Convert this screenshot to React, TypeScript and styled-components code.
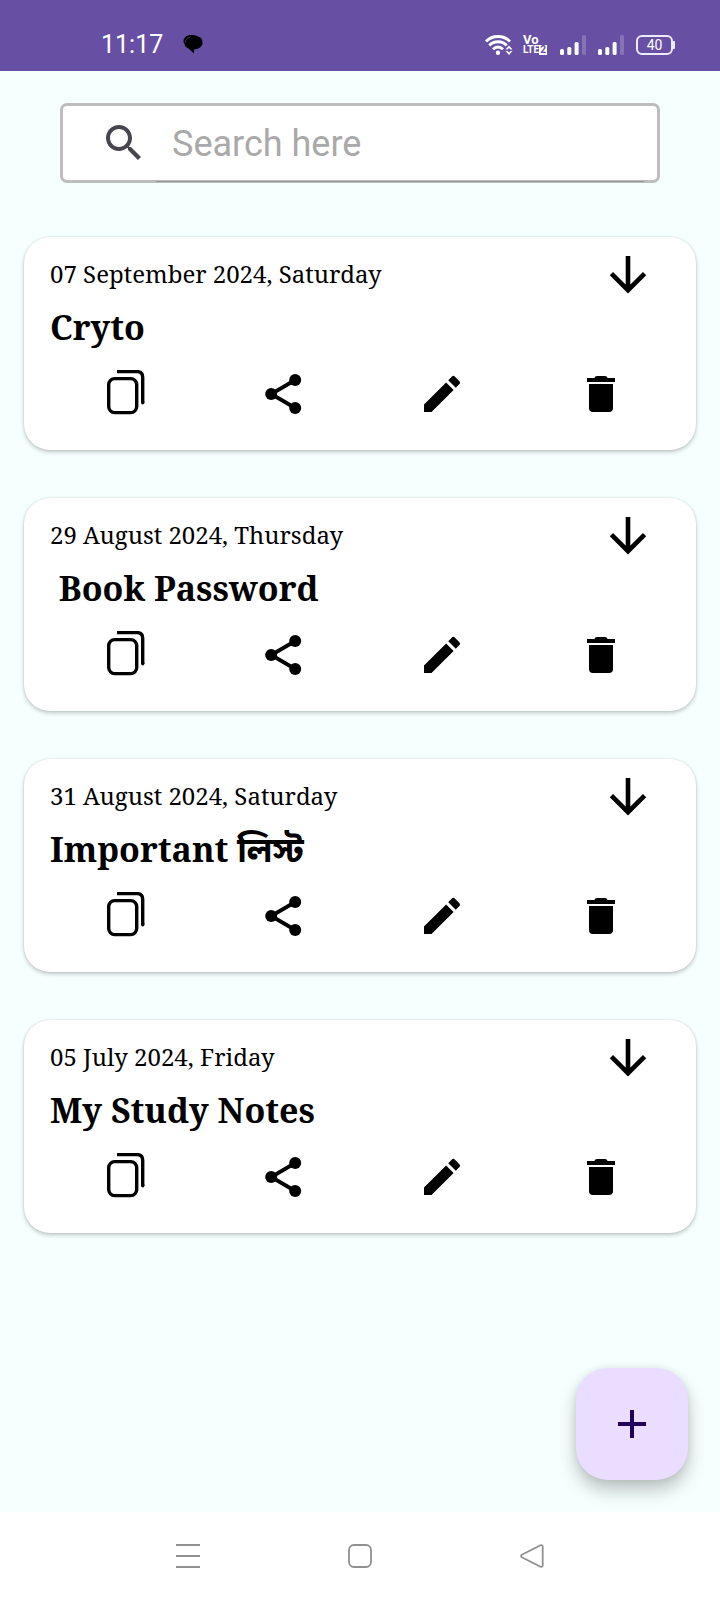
import React from "react";
import styled, { createGlobalStyle } from "styled-components";

const GlobalStyle = createGlobalStyle`
  *, *::before, *::after { box-sizing: border-box; }
  body {
    margin: 0;
    background: #f5fffd;
    font-family: Roboto, sans-serif;
    color: #000;
  }
  button {
    border: 0;
    padding: 0;
    background: none;
    color: inherit;
    font: inherit;
    cursor: pointer;
  }
  svg { display: block; }
`;

const Screen = styled.div`
  display: flex;
  flex-direction: column;
  min-height: 100vh;
`;

const StatusBar = styled.header`
  display: flex;
  align-items: flex-end;
  justify-content: space-between;
  height: 71px;
  padding: 0 45px 16px 101px;
  background: #6750a4;
  color: #fff;
`;

const StatusGroup = styled.div<{ $gap: number }>`
  display: flex;
  align-items: center;
  gap: ${(p) => p.$gap}px;
`;

const Clock = styled.time`
  padding-top: 2px;
  font-size: 25px;
  line-height: 20px;
`;

const Volte = styled.div`
  display: flex;
  flex-direction: column;
  width: 25px;
`;

const VolteRow = styled.div<{ $size: number }>`
  display: flex;
  align-items: center;
  height: 10px;
  font: bold ${(p) => p.$size}px/10px Roboto, sans-serif;
`;

const SimTag = styled.span`
  width: 8px;
  height: 10px;
  background: #fff;
  color: #6750a4;
  text-align: center;
`;

const Battery = styled.div`
  display: flex;
  align-items: center;
`;

const BatteryBody = styled.div`
  width: 37px;
  height: 20px;
  border: 2px solid #efeaf8;
  border-radius: 6px;
  font-size: 14px;
  line-height: 17px;
  text-align: center;
`;

const BatteryTip = styled.div`
  width: 2px;
  height: 8px;
  border-radius: 0 1px 1px 0;
  background: #efeaf8;
`;

const Main = styled.main`
  display: flex;
  flex: 1;
  flex-direction: column;
  padding: 32px 24px 48px;
`;

const SearchBox = styled.label`
  position: relative;
  display: flex;
  align-items: center;
  gap: 24px;
  height: 80px;
  margin: 0 36px 54px;
  padding: 0 13px 0 37px;
  border: 3px solid #bcbebd;
  border-radius: 7px;
  background: #fff;
  color: #49454f;

  &::after {
    content: "";
    position: absolute;
    right: 13px;
    bottom: -2px;
    left: 93px;
    height: 1px;
    background: #969897;
  }
`;

const SearchInput = styled.input`
  flex: 1;
  min-width: 0;
  height: 100%;
  padding: 2px 0 0;
  border: 0;
  outline: 0;
  background: none;
  font: 36px Roboto, sans-serif;
  color: #1c1b1f;

  &::placeholder {
    color: #a9a9a9;
    opacity: 1;
  }
`;

const NoteList = styled.ul`
  display: flex;
  flex-direction: column;
  gap: 48px;
  margin: 0;
  padding: 0;
  list-style: none;
`;

const NoteCard = styled.li`
  padding-bottom: 32px;
  border-radius: 26px;
  background: #fff;
  box-shadow: 0 2px 4px rgba(0, 0, 0, 0.22), 0 0 2px rgba(0, 0, 0, 0.12);
`;

const NoteHeader = styled.div`
  display: flex;
  align-items: flex-start;
  justify-content: space-between;
  padding: 14px 44px 0 26px;
`;

const NoteText = styled.div`
  display: flex;
  flex-direction: column;
  gap: 13px;
  padding-top: 7px;
  font-family: "Noto Serif", "DejaVu Serif Condensed", "DejaVu Serif", "Noto Sans Bengali", serif;
`;

const NoteDate = styled.time`
  font-size: 24px;
  line-height: 32px;
`;

const NoteTitle = styled.h2`
  margin: 0;
  font-size: 34px;
  font-weight: bold;
  line-height: 48px;
  white-space: pre;
`;

const NoteActions = styled.div`
  display: grid;
  grid-template-columns: repeat(4, 1fr);
  justify-items: center;
  margin-top: 19px;
  padding: 0 16px 0 22px;
`;

const AddButton = styled.button`
  position: fixed;
  right: 32px;
  bottom: 120px;
  display: flex;
  align-items: center;
  justify-content: center;
  width: 112px;
  height: 112px;
  border-radius: 32px;
  background: #eaddff;
  color: #21005d;
  box-shadow: 0 10px 18px rgba(0, 0, 0, 0.24), 0 0 8px rgba(0, 0, 0, 0.08);
`;

const NavBar = styled.nav`
  display: grid;
  grid-template-columns: repeat(3, 1fr);
  align-items: center;
  justify-items: center;
  height: 88px;
  padding: 0 102px;
  background: #fff;
  color: #909090;
`;

const ChatIcon = () => (
  <svg width="20" height="20" viewBox="0 0 20 20">
    <path d="M3 2.500C5 .5 12 .5 15 2.500c3 .5 4.500 3 4.500 6 0 4-3 6.500-8.500 7V19.500L5.500 14.500C3 13.500 1.500 11.500 1.300 9.500 0 8 0 5 3 2.500Z" fill="#000" />
    <path d="M2.200 8.500C2.500 5.500 4.500 3.500 7.500 3" fill="none" stroke="#51418a" strokeWidth=".8" />
  </svg>
);

const WifiIcon = () => (
  <svg width="28" height="20" viewBox="0 0 28 20" fill="none" stroke="#fff" strokeWidth="2.800">
    <path d="M1 6.500C7.500-.2 18.500-.2 25 6.500" />
    <path d="M4.300 10.500C9 5.500 17 5.500 21.700 10.500" />
    <path d="M8 14.300C11 11.200 15 11.200 18 14.300" />
    <circle cx="13" cy="17.800" r="2.200" fill="#fff" stroke="none" />
    <path d="m20.500 14.500 3.500-4 3.500 4h-2L24 13l-1.500 1.500ZM20.500 16l3.500 4 3.500-4h-2L24 17.500 22.500 16Z" fill="#fff" stroke="none" />
  </svg>
);

const SignalIcon = () => (
  <svg width="26" height="20" viewBox="0 0 26 20" fill="#fff">
    <rect y="14" width="4" height="6" rx="1.500" />
    <rect x="7.300" y="12" width="4" height="8" rx="1.500" />
    <rect x="14.600" y="7" width="4" height="13" rx="1.500" />
    <rect x="22" width="4" height="20" rx="1.500" opacity=".2" />
  </svg>
);

const SearchIcon = () => (
  <svg width="48" height="48" viewBox="0 0 24 24" fill="currentColor">
    <path d="M15.500 14h-.79l-.28-.27C15.410 12.590 16 11.110 16 9.500 16 5.910 13.090 3 9.500 3S3 5.910 3 9.500 5.910 16 9.500 16c1.610 0 3.090-.59 4.230-1.570l.27.28v.79l5 4.990L20.490 19l-4.990-5zm-6 0C7.010 14 5 11.990 5 9.500S7.010 5 9.500 5 14 7.010 14 9.500 11.990 14 9.500 14z" />
  </svg>
);

const ArrowDownIcon = () => (
  <svg width="48" height="48" viewBox="0 0 48 48" fill="none" stroke="#000" strokeWidth="4.600">
    <path d="M24 5v35M7.400 22.600 24 39.200l16.600-16.600" />
  </svg>
);

const CopyIcon = () => (
  <svg width="48" height="48" viewBox="0 0 48 48" fill="none" stroke="#000" strokeWidth="3.400">
    <rect x="7.700" y="8.600" width="28" height="34" rx="6" />
    <path d="M16 1.600H36q5.700 0 5.700 5.700V33" />
    <path d="M41.700 32v.8" strokeLinecap="round" />
  </svg>
);

const ShareIcon = () => (
  <svg width="48" height="48" viewBox="0 0 24 24">
    <path d="M17.600 5 5.600 12l12 7" fill="none" stroke="#000" strokeWidth="1.900" />
    <circle cx="17.600" cy="5" r="3" />
    <circle cx="5.600" cy="12" r="3" />
    <circle cx="17.600" cy="19" r="3" />
  </svg>
);

const EditIcon = () => (
  <svg width="48" height="48" viewBox="0 0 24 24">
    <path d="M3 17.250V21h3.750L17.810 9.940l-3.750-3.750L3 17.250zM20.710 7.040c.39-.39.39-1.020 0-1.410l-2.340-2.340a.996.996 0 0 0-1.410 0l-1.830 1.830 3.750 3.750 1.830-1.830z" />
  </svg>
);

const DeleteIcon = () => (
  <svg width="48" height="48" viewBox="0 0 24 24">
    <path d="M6 7v12q0 2 2 2h8q2 0 2-2V7ZM5 4v2h14V4h-3.700q-.3-1-1.300-1h-4q-1 0-1.300 1Z" />
  </svg>
);

const PlusIcon = () => (
  <svg width="28" height="28" viewBox="0 0 28 28" fill="currentColor">
    <path d="M12 0h4v12h12v4H16v12h-4V16H0v-4h12Z" />
  </svg>
);

const RecentsIcon = () => (
  <svg width="24" height="24" viewBox="0 0 24 24" stroke="currentColor" strokeWidth="2">
    <path d="M0 1h24M0 12h24M0 23h24" />
  </svg>
);

const HomeIcon = () => (
  <svg width="24" height="24" viewBox="0 0 24 24" fill="none" stroke="currentColor" strokeWidth="1.800">
    <rect x="1" y="1" width="22" height="22" rx="5" />
  </svg>
);

const BackIcon = () => (
  <svg width="24" height="24" viewBox="0 0 24 24" fill="none" stroke="currentColor" strokeWidth="1.800" strokeLinejoin="round">
    <path d="M1.800 10.800 20.500 1.300q2.200-.6 2.200 1.500v18.400q0 2.100-2.200 1.500L1.800 13.200q-1.500-1.200 0-2.400Z" />
  </svg>
);

const notes = [
  { iso: "2024-09-07", date: "07 September 2024, Saturday", title: "Cryto" },
  { iso: "2024-08-29", date: "29 August 2024, Thursday", title: " Book Password" },
  { iso: "2024-08-31", date: "31 August 2024, Saturday", title: "Important লিস্ট" },
  { iso: "2024-07-05", date: "05 July 2024, Friday", title: "My Study Notes" },
];

const actions = [
  { label: "Copy", Icon: CopyIcon },
  { label: "Share", Icon: ShareIcon },
  { label: "Edit", Icon: EditIcon },
  { label: "Delete", Icon: DeleteIcon },
];

export default function App() {
  return (
    <Screen>
      <GlobalStyle />
      <StatusBar>
        <StatusGroup $gap={20}>
          <Clock>11:17</Clock>
          <ChatIcon />
        </StatusGroup>
        <StatusGroup $gap={12}>
          <StatusGroup $gap={10}>
            <WifiIcon />
            <Volte>
              <VolteRow $size={13}>Vo</VolteRow>
              <VolteRow $size={10}>
                LTE<SimTag>2</SimTag>
              </VolteRow>
            </Volte>
          </StatusGroup>
          <SignalIcon />
          <SignalIcon />
          <Battery>
            <BatteryBody>40</BatteryBody>
            <BatteryTip />
          </Battery>
        </StatusGroup>
      </StatusBar>
      <Main>
        <SearchBox>
          <SearchIcon />
          <SearchInput type="text" placeholder="Search here" aria-label="Search here" />
        </SearchBox>
        <NoteList>
          {notes.map((note) => (
            <NoteCard key={note.iso}>
              <NoteHeader>
                <NoteText>
                  <NoteDate dateTime={note.iso}>{note.date}</NoteDate>
                  <NoteTitle>{note.title}</NoteTitle>
                </NoteText>
                <button type="button" aria-label="Expand note">
                  <ArrowDownIcon />
                </button>
              </NoteHeader>
              <NoteActions>
                {actions.map(({ label, Icon }) => (
                  <button key={label} type="button" aria-label={label}>
                    <Icon />
                  </button>
                ))}
              </NoteActions>
            </NoteCard>
          ))}
        </NoteList>
      </Main>
      <AddButton type="button" aria-label="Add note">
        <PlusIcon />
      </AddButton>
      <NavBar>
        <button type="button" aria-label="Recent apps">
          <RecentsIcon />
        </button>
        <button type="button" aria-label="Home">
          <HomeIcon />
        </button>
        <button type="button" aria-label="Back">
          <BackIcon />
        </button>
      </NavBar>
    </Screen>
  );
}
